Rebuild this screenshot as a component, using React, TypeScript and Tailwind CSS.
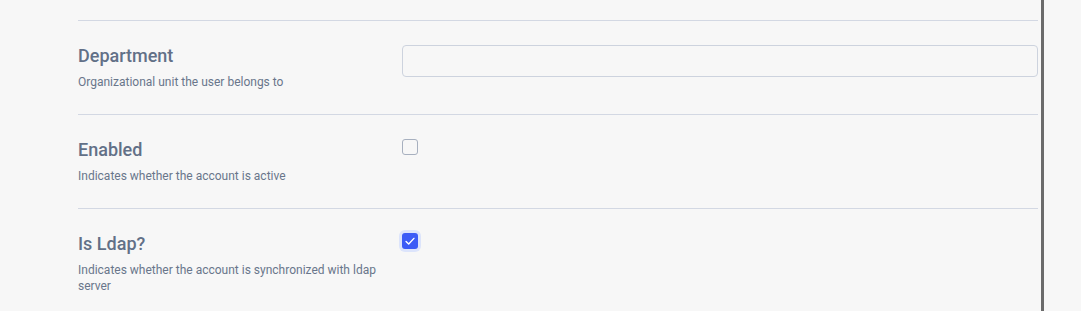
import React from 'react';

interface Field {
  label: string;
  help: string;
  kind: 'text' | 'checkbox';
  checked?: boolean;
}

const fields: Field[] = [
  { label: 'Department', help: 'Organizational unit the user belongs to', kind: 'text' },
  { label: 'Enabled', help: 'Indicates whether the account is active', kind: 'checkbox', checked: false },
  {
    label: 'Is Ldap?',
    help: 'Indicates whether the account is synchronized with ldap server',
    kind: 'checkbox',
    checked: true,
  },
];

function Checkbox({ checked }: { checked?: boolean }) {
  if (checked) {
    return (
      <span className="flex h-4 w-4 items-center justify-center rounded-[3px] bg-[#3b5bf6] ring-[3px] ring-[#dce4fb]">
        <svg viewBox="0 0 16 16" className="h-[14px] w-[14px]" fill="none" stroke="white" strokeWidth="1.6" strokeLinecap="round" strokeLinejoin="round">
          <path d="M3.5 8.5l3 3 6-6.5" />
        </svg>
      </span>
    );
  }
  return <span className="block h-4 w-4 rounded-[3px] border border-[#a7b0bf] bg-[#f7f7f7]" />;
}

export default function App() {
  return (
    <div className="flex h-[311px] overflow-hidden bg-[#f7f7f7] font-['Roboto',sans-serif]">
      <div className="w-[1041px] shrink-0 pl-[78px] pr-[3px]">
        <div className="h-[20px]" />
        {fields.map((field, index) => (
          <div key={index} className="grid grid-cols-[312px_1fr] gap-x-3 border-t border-[#d3d8e3] pt-[21px] pb-[24px]">
            <div>
              <div className="text-lg leading-7 font-medium text-[#627087]">{field.label}</div>
              <p className="mt-1 text-xs leading-4 text-[#69768b]">{field.help}</p>
            </div>
            <div className="pt-[3px]">
              {field.kind === 'text' ? (
                <input
                  type="text"
                  className="block h-[32px] w-full rounded-[4px] border border-[#cdd3de] bg-[#f7f7f7] px-3 text-sm outline-none"
                />
              ) : (
                <Checkbox checked={field.checked} />
              )}
            </div>
          </div>
        ))}
      </div>
      <div className="w-[3px] shrink-0 bg-[#6b6b6b]" />
      <div className="flex-1" />
    </div>
  );
}
